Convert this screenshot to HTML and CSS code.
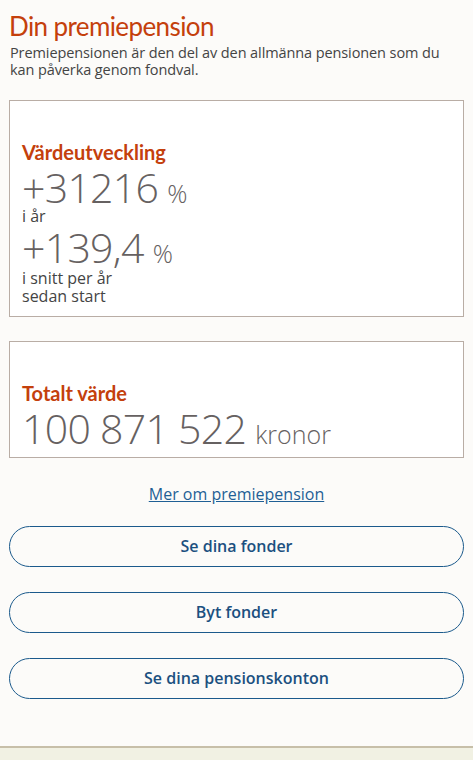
FILE: index.html
```html
<!DOCTYPE html>
<html lang="sv">
<head>
  <meta charset="UTF-8">
  <meta name="viewport" content="width=device-width, initial-scale=1.0">
  <title>Din premiepension</title>
  <link rel="stylesheet" href="styles.css">
</head>
<body>
  <main class="page">
    <h1 class="title">Din premiepension</h1>
    <p class="intro">Premiepensionen är den del av den allmänna pensionen som du kan påverka genom fondval.</p>

    <section class="card card-growth">
      <h2 class="card-heading">Värdeutveckling</h2>
      <div class="figure"><span class="num">+31216</span><span class="unit">%</span></div>
      <div class="caption">i år</div>
      <div class="figure second"><span class="num">+139,4</span><span class="unit">%</span></div>
      <div class="caption narrow">i snitt per år sedan start</div>
    </section>

    <section class="card card-total">
      <h2 class="card-heading">Totalt värde</h2>
      <div class="figure"><span class="num">100 871 522</span><span class="unit">kronor</span></div>
    </section>

    <p class="more"><a href="#">Mer om premiepension</a></p>

    <div class="actions">
      <a class="btn" href="#">Se dina fonder</a>
      <a class="btn" href="#">Byt fonder</a>
      <a class="btn" href="#">Se dina pensionskonton</a>
    </div>
  </main>
  <footer class="footer"></footer>
</body>
</html>
```

FILE: styles.css
```css
body { margin: 0; background: #fcfbf9; font-family: "Open Sans", "Noto Sans", sans-serif; color: #444; }
.page { padding: 0 9px 47px; }
.title { margin: 0; padding-top: 8px; font-family: Lato, "Open Sans", sans-serif; font-size: 26px; font-weight: 400; color: #c4400c; line-height: 36px; letter-spacing: -0.6px; }
.intro { margin: 0 1px; font-size: 14.5px; line-height: 17px; color: #444; letter-spacing: -0.1px; }
.card { background: #fff; border: 1px solid #b9ada5; margin-top: 22px; padding: 39px 12px 11px; }
.card-total { margin-top: 24px; padding-bottom: 9px; }
.card-heading { margin: 0 0 3px; font-family: Lato, "Open Sans", sans-serif; font-size: 20px; font-weight: 700; color: #c4400c; line-height: 24px; }
.figure { color: #666161; font-size: 41px; font-weight: 300; line-height: 40px; }
.figure.second { line-height: 44px; }
.num { letter-spacing: -0.7px; }
.unit { margin-left: 9px; font-size: 25px; line-height: 1; }
.caption { font-size: 16px; line-height: 18px; color: #444; }
.narrow { width: 130px; }
.more { margin: 26px 0 0; text-align: center; font-size: 16px; line-height: 20px; }
.more a { color: #1f5f95; }
.actions { display: flex; flex-direction: column; gap: 25px; margin-top: 22px; }
.btn { display: block; height: 39px; line-height: 39px; border: 1.5px solid #1b5a8c; border-radius: 22px; text-align: center; font-size: 16px; font-weight: 600; color: #1b5080; text-decoration: none; }
.footer { height: 12px; background: #f1f1e3; border-top: 2px solid #c7bfa9; }
```
